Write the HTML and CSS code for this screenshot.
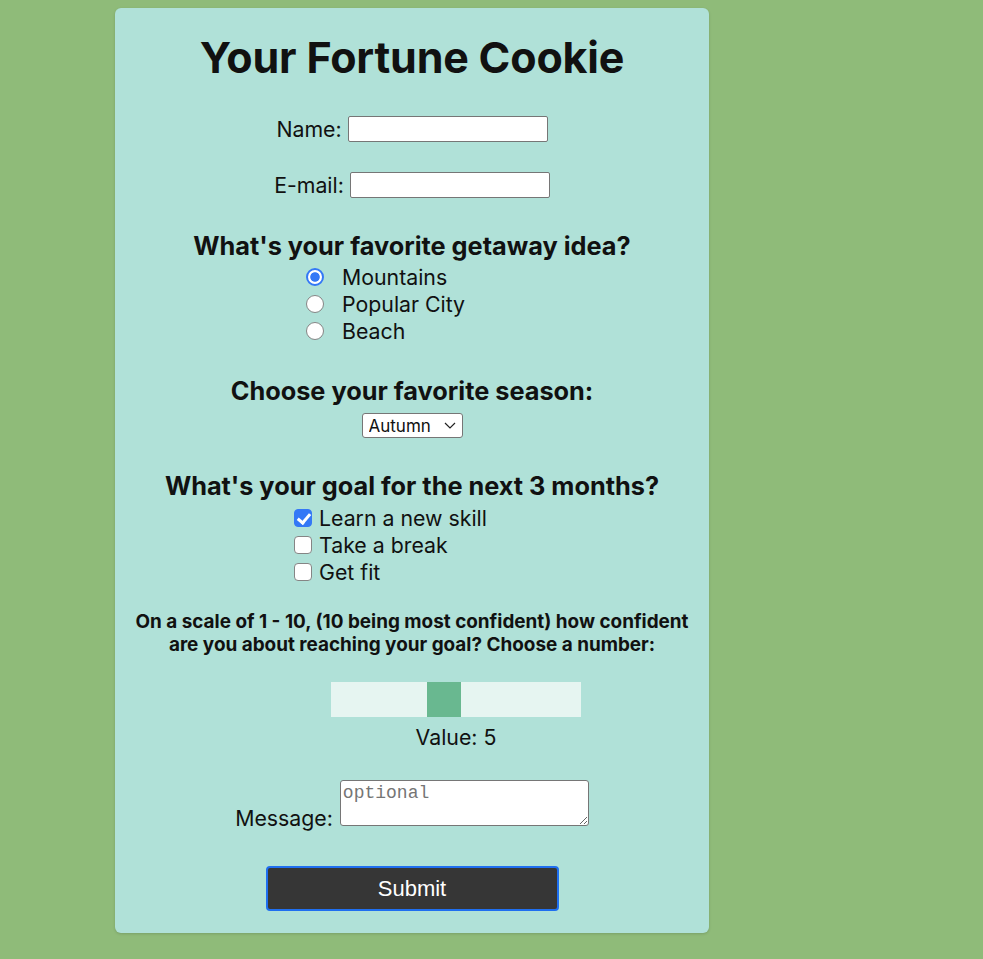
FILE: index.html
```html
<!DOCTYPE html>
<html>
<head>
<meta charset="utf-8">
<link rel="stylesheet" href="styles.css">
</head>
<body>
<form class="card">
  <h1 class="title">Your Fortune Cookie</h1>
  <div class="field-row name-row">
    <label class="label" for="name">Name:</label>
    <input class="text-input" id="name" type="text">
  </div>
  <div class="field-row email-row">
    <label class="label" for="email">E-mail:</label>
    <input class="text-input" id="email" type="email">
  </div>

  <h3 class="question q-getaway">What's your favorite getaway idea?</h3>
  <div class="radio-group">
    <label class="opt"><input class="radio" type="radio" name="getaway" checked><span>Mountains</span></label>
    <label class="opt"><input class="radio" type="radio" name="getaway"><span>Popular City</span></label>
    <label class="opt"><input class="radio" type="radio" name="getaway"><span>Beach</span></label>
  </div>

  <h3 class="question q-season">Choose your favorite season:</h3>
  <div class="select-wrap">
    <select class="select">
      <option>Autumn</option>
      <option>Winter</option>
      <option>Spring</option>
      <option>Summer</option>
    </select>
    <svg class="chev" width="12" height="7" viewBox="0 0 12 7"><path d="M1 1l5 5 5-5" fill="none" stroke="#222" stroke-width="1.2"/></svg>
  </div>

  <h3 class="question q-goal">What's your goal for the next 3 months?</h3>
  <div class="check-group">
    <label class="opt check-opt"><input class="check" type="checkbox" checked><span>Learn a new skill</span></label>
    <label class="opt check-opt"><input class="check" type="checkbox"><span>Take a break</span></label>
    <label class="opt check-opt"><input class="check" type="checkbox"><span>Get fit</span></label>
  </div>

  <p class="scale-text">On a scale of 1 - 10, (10 being most confident) how confident are you about reaching your goal? Choose a number:</p>
  <div class="slider-block">
    <input class="slider" type="range" min="1" max="10" value="5">
    <div class="value">Value: 5</div>
  </div>

  <div class="message-row">
    <label class="label msg-label" for="msg">Message:</label>
    <textarea class="textarea" id="msg" placeholder="optional"></textarea>
  </div>

  <button class="submit" type="button">Submit</button>
</form>
</body>
</html>
```

FILE: styles.css
```css
html, body {
  margin: 0;
  padding: 0;
}
body {
  background: #8fbb79;
  font-family: Inter, "Noto Sans", sans-serif;
  color: #111;
  height: 959px;
}
.card {
  box-sizing: border-box;
  width: 594px;
  margin: 8px 0 0 115px;
  background: #b0e1d8;
  border-radius: 6px;
  box-shadow: 0 1px 3px rgba(0,0,0,0.15);
  padding: 23px 0 22px;
  display: flex;
  flex-direction: column;
  align-items: center;
}
.title {
  margin: 0;
  font-size: 43px;
  line-height: 52px;
  font-weight: 700;
  letter-spacing: -0.2px;
}
.field-row {
  display: flex;
  align-items: center;
  gap: 6px;
  height: 26px;
}
.name-row { margin-top: 33px; }
.email-row { margin-top: 30px; }
.label {
  font-size: 21.3px;
  line-height: 24px;
}
.text-input {
  box-sizing: border-box;
  width: 200px;
  height: 26px;
  margin: 0;
  border: 1px solid #767676;
  border-radius: 2px;
  background: #fff;
}
.question {
  margin: 0;
  font-size: 25.3px;
  line-height: 30px;
  font-weight: 700;
}
.q-getaway { margin-top: 33px; }
.q-season { margin-top: 32px; }
.q-goal { margin-top: 33px; }

.radio-group, .check-group {
  align-self: flex-start;
  display: flex;
  flex-direction: column;
}
.radio-group { margin: 2px 0 0 191px; }
.check-group { margin: 3px 0 0 179px; }

.opt {
  display: flex;
  align-items: center;
  height: 27px;
  font-size: 21.3px;
}
.radio {
  appearance: none;
  box-sizing: border-box;
  width: 18px;
  height: 18px;
  margin: 0 18px 0 0;
  border: 1.5px solid #858585;
  border-radius: 50%;
  background: #fff;
}
.radio:checked {
  border: 2px solid #3478f6;
  background: radial-gradient(circle, #3478f6 0 4.3px, #fff 5.2px);
}
.check {
  appearance: none;
  box-sizing: border-box;
  width: 18px;
  height: 18px;
  margin: 0 7px 0 0;
  border: 1.5px solid #858585;
  border-radius: 4px;
  background: #fff;
  position: relative;
}
.check:checked {
  background: #3478f6;
  border-color: #3478f6;
}
.check:checked::after {
  content: "";
  position: absolute;
  left: 5px;
  top: 1px;
  width: 5px;
  height: 10px;
  border: solid #fff;
  border-width: 0 3px 3px 0;
  transform: rotate(40deg);
}

.select-wrap {
  position: relative;
  margin-top: 7px;
  width: 101px;
  height: 25px;
}
.select {
  appearance: none;
  box-sizing: border-box;
  width: 101px;
  height: 25px;
  margin: 0;
  padding: 0 0 0 6px;
  border: 1px solid #767676;
  border-radius: 3px;
  background: #fff;
  font-family: Inter, sans-serif;
  font-size: 17px;
  color: #111;
}
.chev {
  position: absolute;
  right: 7px;
  top: 9px;
  pointer-events: none;
}

.scale-text {
  margin: 25px 0 0;
  width: 580px;
  text-align: center;
  font-size: 18.9px;
  line-height: 23px;
  font-weight: 700;
}
.slider-block {
  margin-top: 26px;
  padding-left: 88px;
  display: flex;
  flex-direction: column;
  align-items: center;
}
.slider {
  appearance: none;
  -webkit-appearance: none;
  width: 250px;
  height: 35px;
  margin: 0;
  background: #e6f5f1;
  outline: none;
}
.slider::-webkit-slider-thumb {
  -webkit-appearance: none;
  appearance: none;
  width: 34px;
  height: 35px;
  background: #69b890;
  border: none;
  border-radius: 0;
}
.value {
  margin-top: 8px;
  font-size: 21.3px;
  line-height: 24px;
}

.message-row {
  margin-top: 31px;
  display: flex;
  align-items: flex-end;
  gap: 7px;
}
.msg-label {
  line-height: 20px;
  margin-bottom: -2px;
}
.textarea {
  box-sizing: border-box;
  width: 249px;
  height: 46px;
  margin: 0;
  padding: 2px 2px;
  border: 1px solid #767676;
  border-radius: 3px;
  background: #fff;
  font-family: "Liberation Mono", monospace;
  font-size: 18px;
  line-height: 20px;
  resize: vertical;
}
.textarea::placeholder {
  color: #757575;
}
.submit {
  margin-top: 40px;
  box-sizing: border-box;
  width: 293px;
  height: 45px;
  background: #363636;
  color: #fff;
  border: 2px solid #1f6ff0;
  border-radius: 4px;
  font-family: "Liberation Sans", Arial, sans-serif;
  font-size: 22px;
  padding: 0;
}
```
